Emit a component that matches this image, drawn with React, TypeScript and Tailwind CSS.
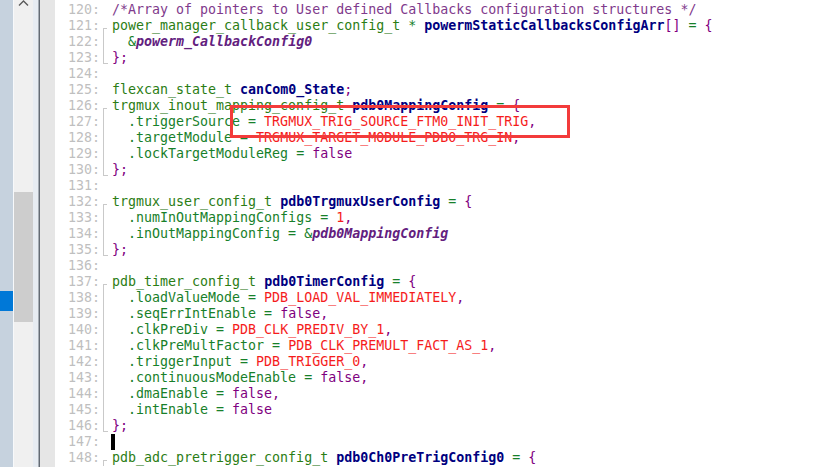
import React from "react"

type Tok = [keyof typeof C, string]
type Fold = "none" | "start" | "mid" | "end"

const C = {
  s: "",
  c: "text-[#7f3a8c]",
  t: "text-[#2b7d14]",
  b: "font-bold text-[#000080]",
  m: "text-[#17802a]",
  p: "text-[#7f007f]",
  e: "text-[#f51c1c]",
  i: "italic font-bold text-[#62207e]",
}

const lines: { n: number; fold: Fold; toks: Tok[]; cursor?: boolean }[] = [
  { n: 120, fold: "none", toks: [["c", "/*Array of pointers to User defined Callbacks configuration structures */"]] },
  {
    n: 121,
    fold: "start",
    toks: [["t", "power_manager_callback_user_config_t"], ["s", " "], ["m", "*"], ["s", " "], ["b", "powermStaticCallbacksConfigArr"], ["p", "[]"], ["s", " "], ["m", "="], ["s", " "], ["p", "{"]],
  },
  { n: 122, fold: "mid", toks: [["s", "  "], ["m", "&"], ["i", "powerm_CallbackConfig0"]] },
  { n: 123, fold: "end", toks: [["p", "};"]] },
  { n: 124, fold: "none", toks: [] },
  { n: 125, fold: "none", toks: [["t", "flexcan_state_t"], ["s", " "], ["b", "canCom0_State"], ["p", ";"]] },
  {
    n: 126,
    fold: "start",
    toks: [["t", "trgmux_inout_mapping_config_t"], ["s", " "], ["b", "pdb0MappingConfig"], ["s", " "], ["m", "="], ["s", " "], ["p", "{"]],
  },
  { n: 127, fold: "mid", toks: [["s", "  "], ["m", ".triggerSource = "], ["e", "TRGMUX_TRIG_SOURCE_FTM0_INIT_TRIG"], ["p", ","]] },
  { n: 128, fold: "mid", toks: [["s", "  "], ["m", ".targetModule = "], ["e", "TRGMUX_TARGET_MODULE_PDB0_TRG_IN"], ["p", ","]] },
  { n: 129, fold: "mid", toks: [["s", "  "], ["m", ".lockTargetModuleReg = "], ["p", "false"]] },
  { n: 130, fold: "end", toks: [["p", "};"]] },
  { n: 131, fold: "none", toks: [] },
  {
    n: 132,
    fold: "start",
    toks: [["t", "trgmux_user_config_t"], ["s", " "], ["b", "pdb0TrgmuxUserConfig"], ["s", " "], ["m", "="], ["s", " "], ["p", "{"]],
  },
  { n: 133, fold: "mid", toks: [["s", "  "], ["m", ".numInOutMappingConfigs = "], ["e", "1"], ["p", ","]] },
  { n: 134, fold: "mid", toks: [["s", "  "], ["m", ".inOutMappingConfig = &"], ["i", "pdb0MappingConfig"]] },
  { n: 135, fold: "end", toks: [["p", "};"]] },
  { n: 136, fold: "none", toks: [] },
  {
    n: 137,
    fold: "start",
    toks: [["t", "pdb_timer_config_t"], ["s", " "], ["b", "pdb0TimerConfig"], ["s", " "], ["m", "="], ["s", " "], ["p", "{"]],
  },
  { n: 138, fold: "mid", toks: [["s", "  "], ["m", ".loadValueMode = "], ["e", "PDB_LOAD_VAL_IMMEDIATELY"], ["p", ","]] },
  { n: 139, fold: "mid", toks: [["s", "  "], ["m", ".seqErrIntEnable = "], ["p", "false,"]] },
  { n: 140, fold: "mid", toks: [["s", "  "], ["m", ".clkPreDiv = "], ["e", "PDB_CLK_PREDIV_BY_1"], ["p", ","]] },
  { n: 141, fold: "mid", toks: [["s", "  "], ["m", ".clkPreMultFactor = "], ["e", "PDB_CLK_PREMULT_FACT_AS_1"], ["p", ","]] },
  { n: 142, fold: "mid", toks: [["s", "  "], ["m", ".triggerInput = "], ["e", "PDB_TRIGGER_0"], ["p", ","]] },
  { n: 143, fold: "mid", toks: [["s", "  "], ["m", ".continuousModeEnable = "], ["p", "false,"]] },
  { n: 144, fold: "mid", toks: [["s", "  "], ["m", ".dmaEnable = "], ["p", "false,"]] },
  { n: 145, fold: "mid", toks: [["s", "  "], ["m", ".intEnable = "], ["p", "false"]] },
  { n: 146, fold: "end", toks: [["p", "};"]] },
  { n: 147, fold: "none", toks: [], cursor: true },
  {
    n: 148,
    fold: "start",
    toks: [["t", "pdb_adc_pretrigger_config_t"], ["s", " "], ["b", "pdb0Ch0PreTrigConfig0"], ["s", " "], ["m", "="], ["s", " "], ["p", "{"]],
  },
]

const FoldMark = ({ kind }: { kind: Fold }) => {
  if (kind === "start")
    return (
      <div className="flex h-full flex-col pl-[3px]">
        <div className="h-[10px]" />
        <div className="w-[4px] flex-1 border-l border-t border-[#c9c9c9]" />
      </div>
    )
  if (kind === "mid")
    return (
      <div className="h-full pl-[3px]">
        <div className="h-full w-[4px] border-l border-[#c9c9c9]" />
      </div>
    )
  if (kind === "end")
    return (
      <div className="h-full pl-[3px]">
        <div className="h-[14px] w-[5px] border-b border-l border-[#c9c9c9]" />
      </div>
    )
  return null
}

export default function App() {
  return (
    <div className="relative flex h-[467px] w-[813px] overflow-hidden bg-white">
      {/* overview ruler */}
      <div className="flex w-[13px] flex-col bg-[#c6d2de] pt-[291px]">
        <div className="h-[20px] bg-[#0078d7]" />
      </div>
      <div className="w-[1px] bg-[#f7f9fb]" />
      {/* scrollbar */}
      <div className="flex w-[19px] flex-col bg-[#f0f0f0]">
        <svg width="19" height="6" viewBox="0 0 19 6" className="block">
          <polyline points="5,5.5 9.5,1 14,5.5" fill="none" stroke="#5a5a5a" strokeWidth="1.4" />
        </svg>
        <div className="mt-[186px] h-[130px] bg-[#cdcdcd]" />
      </div>
      <div className="w-[5px] bg-[#e7ecf2]" />
      <div className="w-[1px] bg-[#a6adb5]" />
      <div className="w-[1px] bg-[#646b74]" />
      <div className="w-[15px] bg-[#e6e6e6]" />

      {/* editor */}
      <div
        className="flex flex-1 flex-col pt-[2px] text-[13.3px] leading-[16px]"
        style={{ fontFamily: '"DejaVu Sans Mono", "Liberation Mono", monospace' }}
      >
        {lines.map((l) => (
          <div key={l.n} className="flex h-[16px] shrink-0">
            <div className="w-[45px] text-right text-[#bfbfbf]">{l.n}:</div>
            <div className="w-[12px]">
              <FoldMark kind={l.fold} />
            </div>
            <div className="whitespace-pre">
              {l.cursor && <span className="-ml-[1px] inline-block h-[16px] w-[4px] align-top bg-black" />}
              {l.toks.map((t, i) => (
                <span key={i} className={C[t[0]]}>
                  {t[1]}
                </span>
              ))}
            </div>
          </div>
        ))}
      </div>

      {/* annotation box */}
      <div className="pointer-events-none absolute left-[230px] top-[105px] h-[33px] w-[340px] border-[3px] border-[#f33b3b]" />
    </div>
  )
}
